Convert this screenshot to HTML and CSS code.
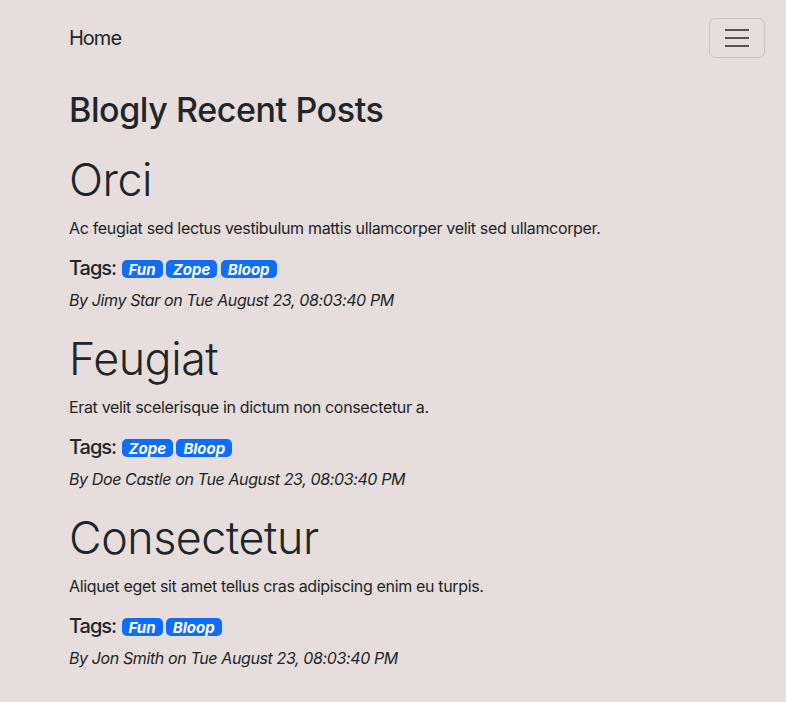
FILE: index.html
```html
<!DOCTYPE html>
<html lang="en">
<head>
<meta charset="utf-8">
<title>Blogly</title>
<link rel="stylesheet" href="styles.css">
</head>
<body>
<nav class="navbar">
  <a class="brand" href="#">Home</a>
  <button class="toggler" type="button" aria-label="Toggle navigation">
    <svg width="30" height="30" viewBox="0 0 30 30"><path stroke="rgba(33,37,41,0.75)" stroke-linecap="butt" stroke-miterlimit="10" stroke-width="2" d="M3 7h24M3 15h24M3 23h24"/></svg>
  </button>
</nav>
<main class="main">
  <h1 class="page-title">Blogly Recent Posts</h1>
  <article class="post">
    <h2 class="post-title">Orci</h2>
    <p class="post-body">Ac feugiat sed lectus vestibulum mattis ullamcorper velit sed ullamcorper.</p>
    <h5 class="tags"><span class="tags-label">Tags:</span> <span class="badge">Fun</span> <span class="badge">Zope</span> <span class="badge">Bloop</span></h5>
    <p class="byline">By Jimy Star on Tue August 23, 08:03:40 PM</p>
  </article>
  <article class="post">
    <h2 class="post-title">Feugiat</h2>
    <p class="post-body">Erat velit scelerisque in dictum non consectetur a.</p>
    <h5 class="tags"><span class="tags-label">Tags:</span> <span class="badge">Zope</span> <span class="badge">Bloop</span></h5>
    <p class="byline">By Doe Castle on Tue August 23, 08:03:40 PM</p>
  </article>
  <article class="post">
    <h2 class="post-title">Consectetur</h2>
    <p class="post-body">Aliquet eget sit amet tellus cras adipiscing enim eu turpis.</p>
    <h5 class="tags"><span class="tags-label">Tags:</span> <span class="badge">Fun</span> <span class="badge">Bloop</span></h5>
    <p class="byline">By Jon Smith on Tue August 23, 08:03:40 PM</p>
  </article>
</main>
</body>
</html>
```
FILE: styles.css
```css
* { box-sizing: border-box; }
html, body { margin: 0; padding: 0; }
body {
  background: #e7dddd;
  color: #212529;
  font-family: Inter, "Noto Sans", sans-serif;
  font-size: 16px;
  line-height: 1.5;
}
.navbar {
  display: flex;
  align-items: center;
  justify-content: space-between;
  padding: 18px 21px 8px 69px;
}
.brand {
  color: #212529;
  text-decoration: none;
  font-size: 20px;
  line-height: 30px;
  letter-spacing: -0.05em;
}
.toggler {
  width: 56px;
  height: 40px;
  padding: 4px 12px;
  background: transparent;
  border: 1px solid rgba(0,0,0,0.12);
  border-radius: 6px;
  display: flex;
  align-items: center;
  justify-content: center;
}
.toggler svg { display: block; }
.main { padding: 0 69px; }
.page-title {
  font-size: 34px;
  font-weight: 500;
  line-height: 1.2;
  letter-spacing: -0.012em;
  margin: 24px 0 23px;
}
.post-title {
  font-size: 44.8px;
  font-weight: 300;
  line-height: 1.2;
  letter-spacing: -0.01em;
  margin: 0 0 8px;
}
.post-body {
  margin: 0 0 16px;
  letter-spacing: -0.021em;
}
.tags {
  font-size: 20px;
  font-weight: 500;
  line-height: 1.2;
  margin: 0 0 8px;
}
.tags-label { letter-spacing: -0.05em; }
.badge {
  display: inline-block;
  background: #0d6efd;
  color: #fff;
  font-size: 15px;
  font-weight: 700;
  font-style: italic;
  line-height: 15px;
  padding: 2px 7px 1px;
  border-radius: 5px;
}
.badge + .badge { margin-left: -2px; }
.byline {
  font-style: italic;
  letter-spacing: -0.024em;
  margin: 0 0 21.25px;
}
```
